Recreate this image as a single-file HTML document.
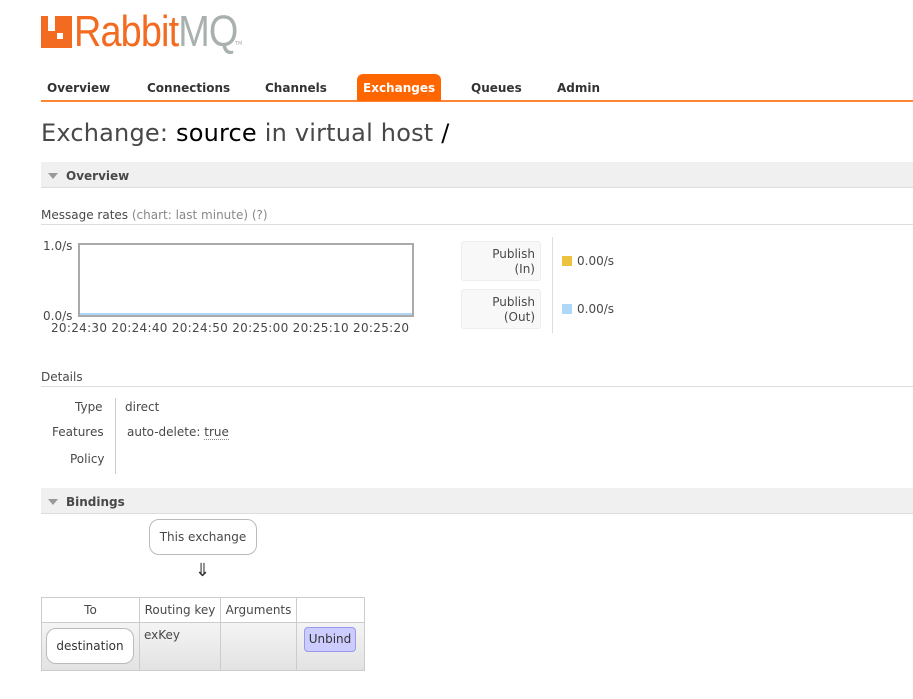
<!DOCTYPE html>
<html><head><meta charset="utf-8"><style>
*{margin:0;padding:0;box-sizing:border-box}
body{width:913px;height:699px;background:#fff;font-family:"DejaVu Sans",Verdana,sans-serif;font-size:12px;color:#484848;position:relative;overflow:hidden}
.a{position:absolute;white-space:nowrap}
.nav{font-weight:bold;font-size:12px;color:#333;top:81px}
.hdr{position:absolute;left:41px;right:0;height:26px;background:#f0f0f0;border-bottom:1px solid #ddd}
.hdr .t{position:absolute;left:25px;top:7px;font-weight:bold;font-size:12px;color:#484848}
.tri{position:absolute;left:7px;top:11px;width:0;height:0;border-left:5px solid transparent;border-right:5px solid transparent;border-top:6px solid #999}
.leg{position:absolute;left:461px;width:80px;height:40px;background:#f8f8f8;border:1px solid #eee;border-radius:3px;text-align:right;padding:5px 5px;font-size:12px;line-height:15px;color:#484848}
td,th{border:1px solid #ccc;font-weight:normal;font-size:12px;color:#484848}
</style></head><body>
<div class="a" style="left:41px;top:16px;width:31px;height:32px;background:#f26b21"></div>
<div class="a" style="left:48px;top:16px;width:7px;height:15px;background:#fff"></div>
<div class="a" style="left:57px;top:33px;width:6px;height:6px;background:#fff"></div>
<div class="a" style="left:74px;top:7px;font-family:'Liberation Sans',sans-serif;font-size:44px;color:#f26b21;letter-spacing:-1px;transform:scaleX(0.86);transform-origin:0 0">Rabbit<span style="color:#a9b1ad">MQ</span></div>
<div class="a" style="left:235px;top:41px;font-size:5px;color:#aaa">TM</div>

<div class="a nav" style="left:47px">Overview</div>
<div class="a nav" style="left:147px">Connections</div>
<div class="a nav" style="left:265px">Channels</div>
<div class="a" style="left:357px;top:74px;width:84px;height:27px;background:#f60;border-radius:6px 6px 0 0"></div>
<div class="a nav" style="left:363px;color:#fff">Exchanges</div>
<div class="a nav" style="left:471px">Queues</div>
<div class="a nav" style="left:557px">Admin</div>
<div class="a" style="left:41px;top:100px;right:0;height:2px;background:#f60;opacity:.8"></div>

<div class="a" style="left:41px;top:119px;font-size:24px;color:#484848;letter-spacing:0.2px">Exchange: <span style="color:#000">source</span> in virtual host <span style="color:#000">/</span></div>

<div class="hdr" style="top:162px"><div class="tri"></div><div class="t">Overview</div></div>

<div class="a" style="left:41px;top:208px;font-size:12px">Message rates <span style="color:#888">(chart: last minute) (?)</span></div>
<div class="a" style="left:41px;top:224px;right:0;height:1px;background:#ddd"></div>

<div class="a" style="left:43px;top:239px">1.0/s</div>
<div class="a" style="left:43px;top:309px">0.0/s</div>
<div class="a" style="left:78px;top:243px;width:336px;height:74px;border:2px solid #aaa"></div>
<div class="a" style="left:80px;top:313px;width:332px;height:2px;background:#afd8f8"></div>
<div class="a" style="left:51px;top:321px;letter-spacing:0.3px">20:24:30 20:24:40 20:24:50 20:25:00 20:25:10 20:25:20</div>

<div class="leg" style="top:241px">Publish<br>(In)</div>
<div class="leg" style="top:289px">Publish<br>(Out)</div>
<div class="a" style="left:552px;top:237px;width:1px;height:96px;background:#ddd"></div>
<div class="a" style="left:562px;top:256px;width:10px;height:10px;background:#edc240"></div>
<div class="a" style="left:577px;top:254px">0.00/s</div>
<div class="a" style="left:562px;top:304px;width:10px;height:10px;background:#afd8f8"></div>
<div class="a" style="left:577px;top:302px">0.00/s</div>

<div class="a" style="left:41px;top:370px">Details</div>
<div class="a" style="left:41px;top:386px;right:0;height:1px;background:#ddd"></div>
<div class="a" style="left:75px;top:400px">Type</div>
<div class="a" style="left:52px;top:425px">Features</div>
<div class="a" style="left:70px;top:452px">Policy</div>
<div class="a" style="left:115px;top:398px;width:1px;height:76px;background:#ccc"></div>
<div class="a" style="left:125px;top:400px">direct</div>
<div class="a" style="left:127px;top:425px">auto-delete: <span style="border-bottom:1px dotted #888">true</span></div>

<div class="hdr" style="top:488px"><div class="tri"></div><div class="t">Bindings</div></div>

<div class="a" style="left:149px;top:519px;width:108px;height:36px;border:1px solid #bbb;border-radius:10px;text-align:center;line-height:35px">This exchange</div>
<div class="a" style="left:195px;top:560px;font-size:18px;color:#333">⇓</div>

<table class="a" style="left:41px;top:597px;border-collapse:collapse;width:324px">
<tr style="height:25px"><th style="width:98px">To</th><th style="width:81px">Routing key</th><th style="width:76px">Arguments</th><th></th></tr>
<tr style="height:48px;background:linear-gradient(#f4f4f4,#e2e2e2)"><td></td><td style="vertical-align:top;padding:5px 4px">exKey</td><td></td><td></td></tr>
</table>
<div class="a" style="left:46px;top:628px;width:88px;height:36px;background:#fff;border:1px solid #bbb;border-radius:10px;text-align:center;line-height:35px;color:#333">destination</div>
<div class="a" style="left:304px;top:627px;width:52px;height:25px;background:#ccf;border:1px solid #99e;border-radius:4px;text-align:center;line-height:23px;color:#333">Unbind</div>
</body></html>
